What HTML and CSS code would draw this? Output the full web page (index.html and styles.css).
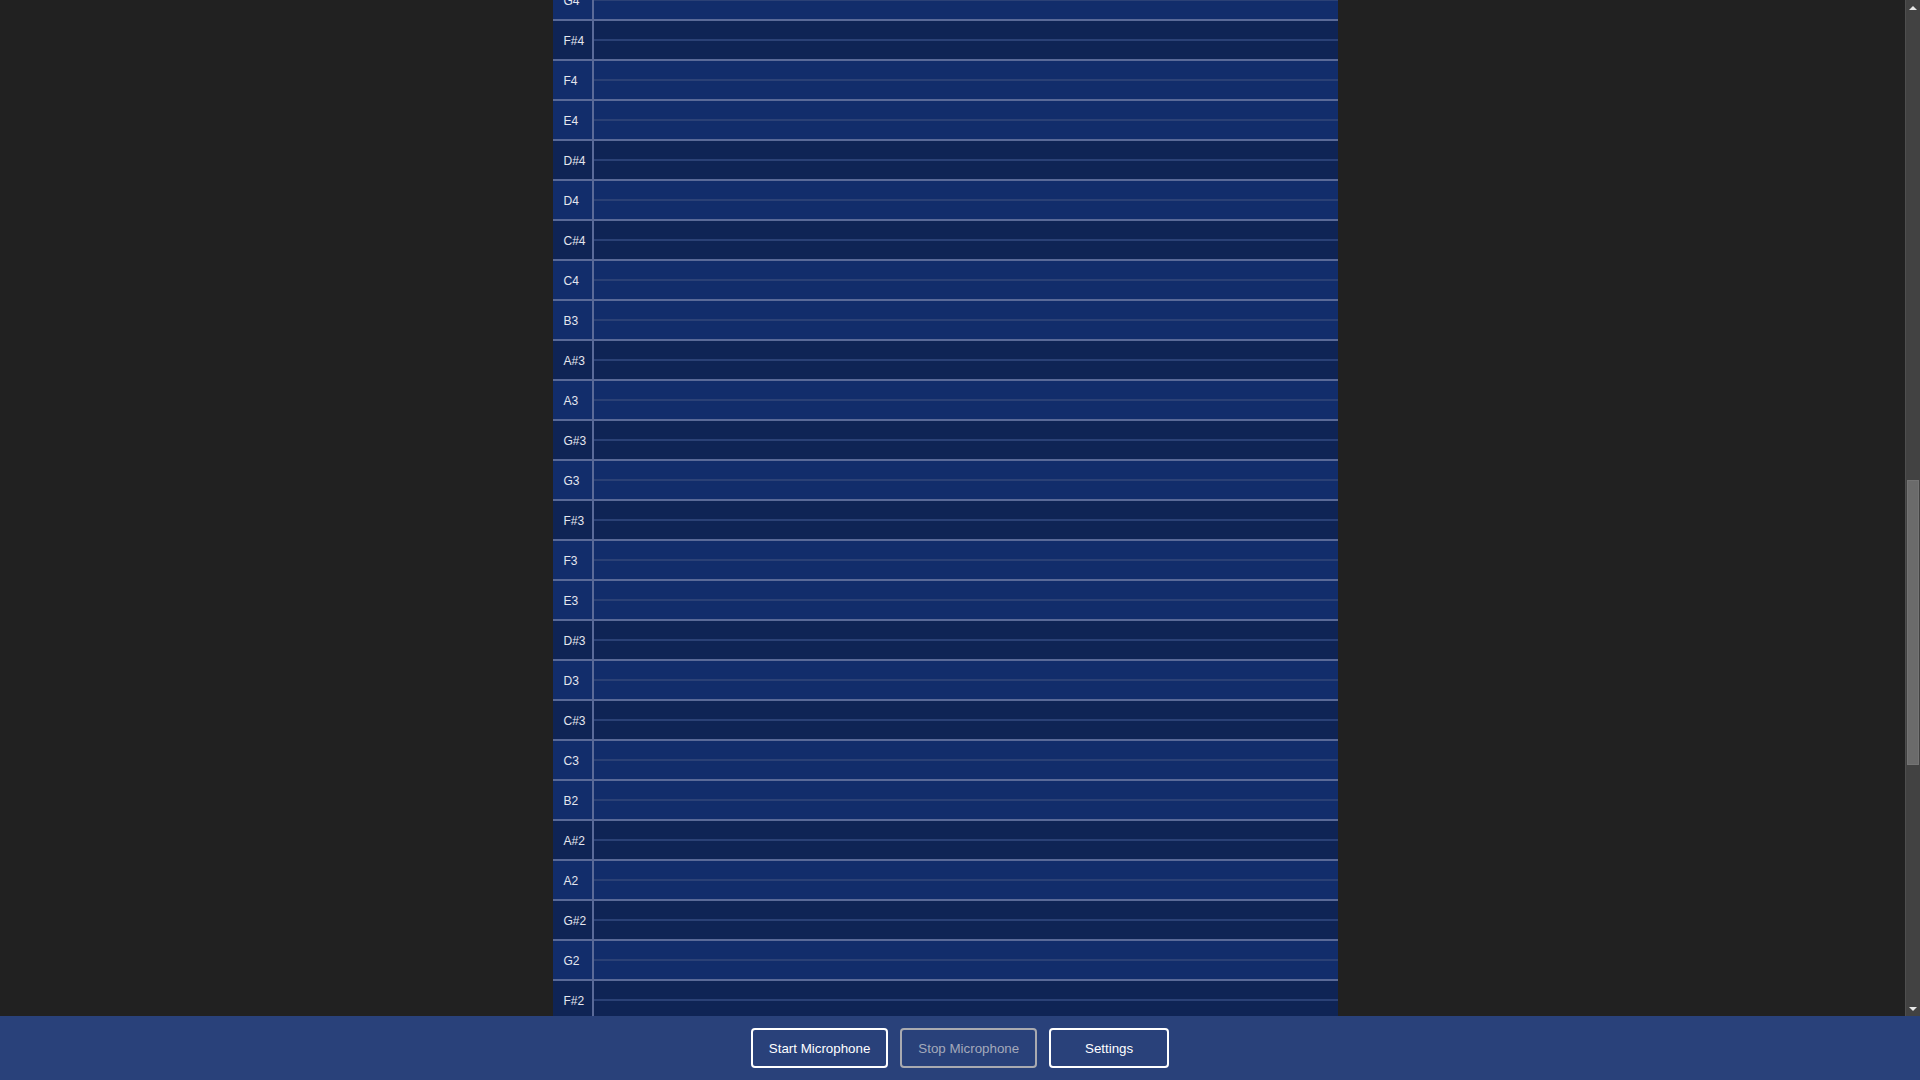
FILE: index.html
```html
<!DOCTYPE html>
<html lang="en">
<head>
<meta charset="utf-8">
<title>Pitch Roll</title>
<link rel="stylesheet" href="styles.css">
</head>
<body>
<div class="app">
  <div class="main">
    <main class="scroller" id="scroller">
      <div class="wrap">
        <div class="roll" id="roll"></div>
      </div>
    </main>
    <div class="vbar" aria-hidden="true">
      <div class="vbtn"><span class="arrow up"></span></div>
      <div class="track" id="track"><div class="thumb" id="thumb"></div></div>
      <div class="vbtn"><span class="arrow down"></span></div>
    </div>
  </div>
  <footer class="bar">
    <button class="btn">Start Microphone</button>
    <button class="btn disabled" disabled>Stop Microphone</button>
    <button class="btn wide">Settings</button>
  </footer>
</div>
<script src="script.js"></script>
</body>
</html>
```
FILE: styles.css
```css
html, body {
  margin: 0;
  padding: 0;
  height: 100%;
  background: #212121;
  font-family: "Liberation Sans", Arial, sans-serif;
  overflow: hidden;
}
.app {
  display: flex;
  flex-direction: column;
  height: 100vh;
}
.main {
  flex: 1;
  min-height: 0;
  display: flex;
}
.scroller {
  flex: 1;
  min-width: 0;
  overflow-y: scroll;
  background: #212121;
  scrollbar-width: none;
}
.scroller::-webkit-scrollbar {
  display: none;
}
.wrap {
  max-width: 800px;
  margin: 0 auto;
}
.roll {
  width: 785px;
  display: flex;
  flex-direction: column;
}
.row {
  height: 40px;
  box-sizing: border-box;
  border-top: 2px solid #5a6a98;
  display: flex;
  background: #122d6b;
}
.row.sharp {
  background: #0f2455;
}
.label {
  flex: none;
  width: 41px;
  box-sizing: border-box;
  padding: 2px 0 0 11px;
  border-right: 2px solid #5a6a98;
  display: flex;
  align-items: center;
  font-size: 12px;
  color: #e4e6ee;
  white-space: nowrap;
}
.lane {
  flex: 1;
  background: linear-gradient(to bottom, transparent 18px, #2b4176 18px, #2b4176 20px, transparent 20px);
}
.vbar {
  flex: none;
  width: 15px;
  box-sizing: border-box;
  border-left: 1px solid #4f4f4f;
  background: #424242;
  display: flex;
  flex-direction: column;
}
.vbtn {
  flex: none;
  height: 15px;
  display: flex;
  align-items: center;
  justify-content: center;
}
.arrow {
  width: 0;
  height: 0;
  border-left: 4px solid transparent;
  border-right: 4px solid transparent;
}
.arrow.up {
  border-bottom: 4px solid #e8e8e8;
}
.arrow.down {
  border-top: 4px solid #e8e8e8;
}
.track {
  flex: 1;
  position: relative;
}
.thumb {
  position: absolute;
  left: 1px;
  right: 1px;
  top: 464px;
  height: 285px;
  background: #6b6b6b;
  box-sizing: border-box;
  border: 1px solid #747474;
}
.bar {
  height: 64px;
  flex: none;
  background: #29417a;
  display: flex;
  align-items: center;
  justify-content: center;
  gap: 12px;
}
.btn {
  height: 40px;
  min-width: 120px;
  padding: 0 16px;
  border: 2px solid #ffffff;
  border-radius: 4px;
  background: transparent;
  color: #ffffff;
  font-family: "Liberation Sans", Arial, sans-serif;
  font-size: 13.333px;
  cursor: pointer;
}
.btn.disabled {
  border-color: #a9aab0;
  color: #a4a9bb;
  cursor: default;
}
```
FILE: script.js
```js
(function () {
  var names = ["C", "C#", "D", "D#", "E", "F", "F#", "G", "G#", "A", "A#", "B"];
  var roll = document.getElementById("roll");
  var html = "";
  for (var m = 108; m >= 21; m--) {
    var n = names[m % 12];
    var oct = Math.floor(m / 12) - 1;
    var sharp = n.indexOf("#") >= 0;
    html += '<div class="row' + (sharp ? ' sharp' : '') + '"><div class="label">' + n + oct + '</div><div class="lane"></div></div>';
  }
  roll.innerHTML = html;
  var sc = document.getElementById("scroller");
  sc.scrollTop = 1661;
  var track = document.getElementById("track");
  var thumb = document.getElementById("thumb");
  function sync() {
    var th = track.clientHeight;
    var ratio = sc.clientHeight / sc.scrollHeight;
    thumb.style.height = Math.round(th * ratio) + "px";
    thumb.style.top = Math.round(th * sc.scrollTop / sc.scrollHeight) + "px";
  }
  sync();
  sc.addEventListener("scroll", sync);
})();
```
